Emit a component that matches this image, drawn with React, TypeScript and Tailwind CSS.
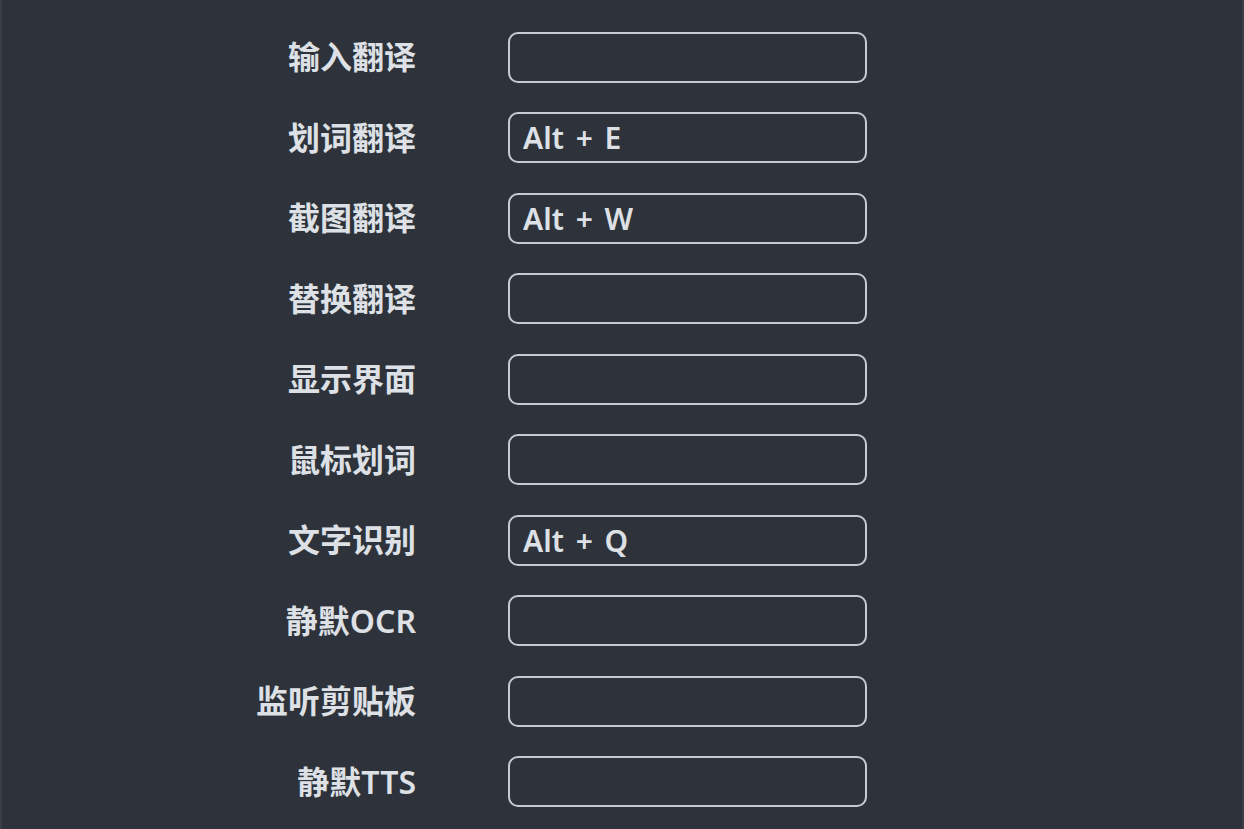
import { useState } from "react";

interface Shortcut {
  label: string;
  value: string;
}

const shortcuts: Shortcut[] = [
  { label: "输入翻译", value: "" },
  { label: "划词翻译", value: "Alt + E" },
  { label: "截图翻译", value: "Alt + W" },
  { label: "替换翻译", value: "" },
  { label: "显示界面", value: "" },
  { label: "鼠标划词", value: "" },
  { label: "文字识别", value: "Alt + Q" },
  { label: "静默OCR", value: "" },
  { label: "监听剪贴板", value: "" },
  { label: "静默TTS", value: "" },
];

function ShortcutRow({ item }: { item: Shortcut }) {
  const [value, setValue] = useState(item.value);
  return (
    <div className="flex items-center">
      <label className="w-[160px] shrink-0 text-right text-[32px] font-semibold leading-none text-[#dde0e5]">
        {item.label}
      </label>
      <input
        value={value}
        readOnly
        onChange={(e) => setValue(e.target.value)}
        className="ml-[92px] h-[51px] w-[359px] rounded-[10px] border-2 border-[#c6cbd2] bg-transparent px-[13px] text-[30px] font-semibold text-[#dde0e5] outline-none [word-spacing:4px]"
      />
    </div>
  );
}

export default function App() {
  return (
    <div
      className="min-h-screen border-x-2 border-[#3a3e46] bg-[#2e323a] pl-[254px] pt-[31.5px]"
      style={{ fontFamily: '"Noto Sans", "Noto Sans CJK SC", sans-serif' }}
    >
      <div className="flex flex-col gap-[29.5px]">
        {shortcuts.map((item) => (
          <ShortcutRow key={item.label} item={item} />
        ))}
      </div>
    </div>
  );
}
